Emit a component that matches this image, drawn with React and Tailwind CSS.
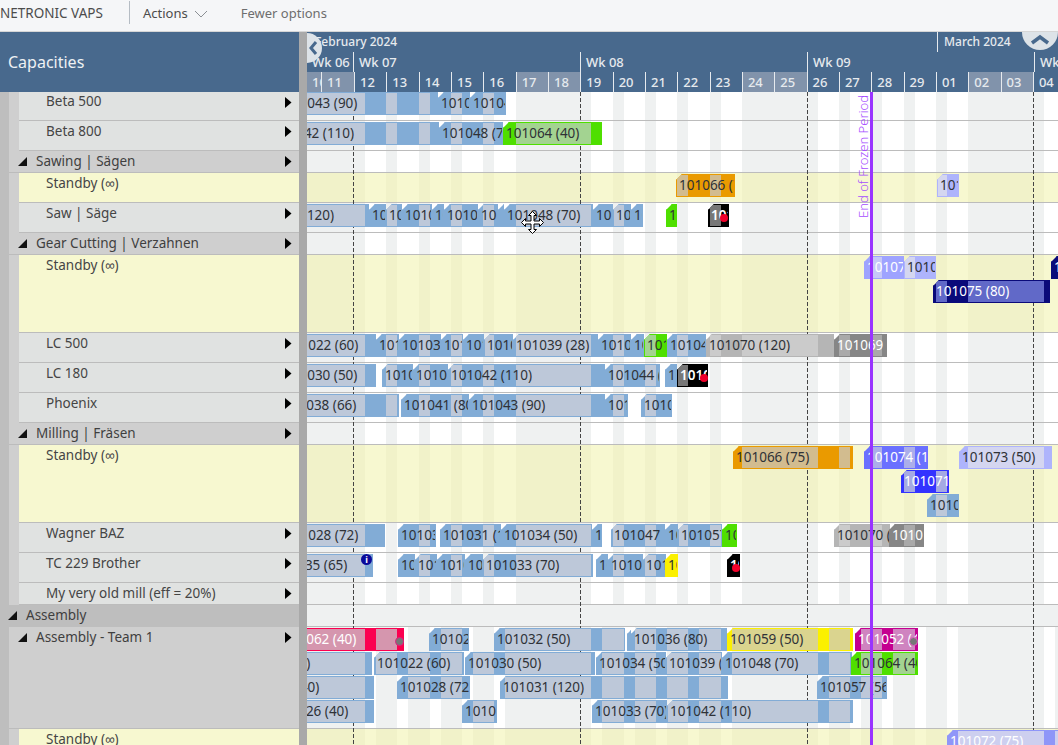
import React from "react";

const DAY = 32.33;
const dayStart = (n) => 289.33 + DAY * n; // n = 0 is Sat Feb 10
const isWeekend = (n) => n % 7 === 0 || n % 7 === 1;

// Non-working intervals per calendar, in page x
function offTimes(calendar) {
  const out = [];
  for (let n = 0; n < 24; n++) {
    const d = dayStart(n);
    if (isWeekend(n)) {
      out.push([d, d + DAY]);
    } else {
      out.push([d, d + 11]);
      if (calendar === "single") out.push([d + 22, d + DAY]);
    }
  }
  return out;
}

const TONES = {
  blue: { main: "bg-[#82acd6] border-[#82acd6]", off: "bg-[#bdc8d9]", text: "text-[#2f3237]" },
  green: { main: "bg-[#4fdf00] border-[#4fdf00]", off: "bg-[#a3d391]", text: "text-[#2f3237]" },
  orange: { main: "bg-[#ea9a00] border-[#ea9a00]", off: "bg-[#d2bc8f]", text: "text-[#2f3237]" },
  lavender: { main: "bg-[#aeb4fc] border-[#aeb4fc]", off: "bg-[#d4d6f0]", text: "text-[#2f3237]" },
  periwinkle: { main: "bg-[#9ea3ff] border-[#9ea3ff]", off: "bg-[#c5c8f8]", text: "text-white" },
  periwinkle2: { main: "bg-[#8f96f8] border-[#8f96f8]", off: "bg-[#cdcfef]", text: "text-white" },
  violet: { main: "bg-[#6a70ff] border-[#6a70ff]", off: "bg-[#abaeea]", text: "text-white" },
  bright: { main: "bg-[#3333ff] border-[#3333ff]", off: "bg-[#a5a9e3]", text: "text-white" },
  navy: { main: "bg-[#0a0a7a] border-[#0a0a7a]", off: "bg-[#6169c8]", text: "text-white" },
  gray: { main: "bg-[#b5b5b5] border-[#b5b5b5]", off: "bg-[#cbcbcb]", text: "text-[#2f3237]" },
  darkgray: { main: "bg-[#868686] border-[#868686]", off: "bg-[#a9a9a9]", text: "text-white" },
  black: { main: "bg-black border-black", off: "bg-[#777777]", text: "text-white font-semibold" },
  crimson: { main: "bg-[#fb0050] border-[#fb0050]", off: "bg-[#d596ae]", text: "text-white" },
  yellow: { main: "bg-[#fbf000] border-[#fbf000]", off: "bg-[#dad48f]", text: "text-[#2f3237]" },
  magenta: { main: "bg-[#c40090] border-[#c40090]", off: "bg-[#cf84c0]", text: "text-white" },
};

// Left tree and gantt rows, top to bottom
const ROWS = [
  { label: "Beta 500", kind: "leaf", h: 29, first: true },
  { label: "Beta 800", kind: "leaf", h: 30 },
  { label: "Sawing | Sägen", kind: "group", h: 22 },
  { label: "Standby (∞)", kind: "standby", h: 30 },
  { label: "Saw | Säge", kind: "leaf", h: 30 },
  { label: "Gear Cutting | Verzahnen", kind: "group", h: 22 },
  { label: "Standby (∞)", kind: "standby", h: 78 },
  { label: "LC 500", kind: "leaf", h: 30 },
  { label: "LC 180", kind: "leaf", h: 30 },
  { label: "Phoenix", kind: "leaf", h: 30 },
  { label: "Milling | Fräsen", kind: "group", h: 22 },
  { label: "Standby (∞)", kind: "standby", h: 78 },
  { label: "Wagner BAZ", kind: "leaf", h: 30 },
  { label: "TC 229 Brother", kind: "leaf", h: 30 },
  { label: "My very old mill (eff = 20%)", kind: "leaf", h: 22 },
  { label: "Assembly", kind: "top", h: 22 },
  { label: "Assembly - Team 1", kind: "team", h: 102, calendar: "single" },
  { label: "Standby (∞)", kind: "standby", h: 30, calendar: "single", last: true },
];

// [y, calendar, [[start, end, text, tone], ...]] in page coordinates
const LANES = [
  [92, "normal", [[281, 438, "101043 (90)"], [438, 470, "101048 (70)"], [470, 506, "101042 (110)"]]],
  [122, "normal", [[270, 439, "101042 (110)"], [439, 503, "101048 (70)"], [503, 602, "101064 (40)", "green"]]],
  [174, "normal", [[676, 735, "101066 (75)", "orange"], [937, 959, "101073 (50)", "lavender"]]],
  [204, "normal", [
    [250, 369, "101031 (120)"], [369, 386, "101022"], [386, 402, "101030"], [402, 432, "101028"], [432, 444, "101034"],
    [444, 478, "101033"], [478, 498, "101039"], [498, 504, ""], [504, 593, "101048 (70)"], [593, 613, "101044"],
    [613, 631, "101047"], [631, 643, "101057"], [666, 677, "101064", "green"], [708, 729, "101069", "black"],
  ]],
  [256, "normal", [[864, 904, "101074 (10)", "periwinkle"], [904, 936, "101073 (50)", "lavender"], [1051, 1090, "101076", "navy"]]],
  [280, "normal", [[933, 1050, "101075 (80)", "navy"]]],
  [334, "normal", [
    [282, 376, "101022 (60)"], [376, 399, "101028"], [399, 441, "101030"], [441, 463, "101031"], [463, 484, "101033"],
    [484, 513, "101034"], [513, 598, "101039 (28)"], [598, 631, "101042"], [631, 644, "101044"], [644, 667, "101064", "green"],
    [667, 706, "101047"], [706, 834, "101070 (120)", "gray"], [834, 887, "101069", "darkgray"],
  ]],
  [364, "normal", [
    [281, 376, "101030 (50)"], [382, 413, "101036"], [413, 448, "101037"], [448, 605, "101042 (110)"],
    [605, 660, "101044 (60)"], [665, 677, "101046"], [677, 708, "101068", "black"],
  ]],
  [394, "normal", [
    [280, 399, "101038 (66)"], [401, 469, "101041 (80)"], [469, 605, "101043 (90)"], [605, 628, "101045"], [641, 672, "101049"],
  ]],
  [446, "normal", [[733, 853, "101066 (75)", "orange"], [864, 928, "101074 (100)", "violet"], [959, 1052, "101073 (50)", "lavender"]]],
  [470, "normal", [[901, 949, "101071", "bright"]]],
  [494, "normal", [[927, 959, "101077"]]],
  [524, "normal", [
    [282, 385, "101028 (72)"], [398, 436, "101030"], [440, 501, "101031 (120)"], [501, 592, "101034 (50)"], [592, 602, "101038"],
    [611, 665, "101047"], [665, 678, "101050"], [678, 722, "101057"], [722, 737, "101064", "green"],
    [834, 890, "101070 (120)", "gray"], [889, 924, "101069", "darkgray"],
  ]],
  [554, "normal", [
    [271, 373, "101035 (65)"], [398, 415, "101021"], [415, 437, "101024"], [437, 465, "101025"], [465, 483, "101029"],
    [483, 593, "101033 (70)"], [596, 608, "101037"], [608, 643, "101040"], [643, 666, "101046"], [665, 678, "101059", "yellow"],
    [727, 740, "101068", "black"],
  ]],
  [628, "single", [
    [280, 404, "101062 (40)", "crimson"], [429, 469, "101026"], [494, 625, "101032 (50)"], [627, 631, ""], [631, 727, "101036 (80)"],
    [727, 853, "101059 (50)", "yellow"], [855, 918, "101052 (40)", "magenta"],
  ]],
  [652, "single", [
    [234, 372, "101018 (50)"], [374, 464, "101022 (60)"], [465, 595, "101030 (50)"], [596, 666, "101034 (50)"], [666, 722, "101039 (80)"],
    [722, 852, "101048 (70)"], [851, 918, "101064 (40)", "green"],
  ]],
  [676, "single", [[243, 374, "101020 (40)"], [397, 470, "101028 (72)"], [500, 728, "101031 (120)"], [817, 887, "101057 (56)"]]],
  [700, "single", [[272, 374, "101026 (40)"], [462, 497, "101037"], [592, 667, "101033 (70)"], [667, 853, "101042 (110)"]]],
  [730, "single", [[947, 1070, "101072 (75)", "periwinkle2"]]],
];

const DAY_LABELS = [
  ["10", true, "w-[14px]"],
  ["11", true, "w-[33px]"],
  ["12"], ["13"], ["14"], ["15"], ["16"],
  ["17", true], ["18", true],
  ["19"], ["20"], ["21"], ["22"], ["23"],
  ["24", true], ["25", true],
  ["26"], ["27"], ["28"], ["29"], ["01"],
  ["02", true], ["03", true],
  ["04"],
];

const WEEK_LINES = [353, 580, 807, 1033];

function Triangle({ className }) {
  return (
    <svg width="9" height="9" viewBox="0 0 9 9" className={className}>
      <polygon points="9,0 9,9 0,9" fill="#111" />
    </svg>
  );
}

function RowArrow() {
  return (
    <svg width="7" height="11" viewBox="0 0 7 11" className="absolute left-[285px] top-[5px]">
      <polygon points="0,0 6.5,5.5 0,11" fill="#000" />
    </svg>
  );
}

function TreeRow({ row }) {
  const { label, kind, h, last, first } = row;
  const height = { height: h };
  const border = last ? "" : "border-b border-[#bcbcbc]";

  if (kind === "top") {
    return (
      <div style={height} className="relative flex shrink-0 items-start bg-[#bebebe] text-[#3f3f3f]">
        <Triangle className="ml-[8px] mt-[6px]" />
        <span className="ml-[9px] leading-[20px]">{label}</span>
      </div>
    );
  }

  if (kind === "group" || kind === "team") {
    return (
      <div style={height} className="flex shrink-0 bg-[#bebebe]">
        <div className={`relative flex flex-1 items-start ml-[9px] bg-[#cfcfcf] text-[#3f3f3f] ${border}`}>
          <Triangle className="ml-[9px] mt-[6px]" />
          <span className="ml-[9px] leading-[20px]">{label}</span>
          <div className="absolute left-[-9px] top-0">
            <RowArrow />
          </div>
        </div>
      </div>
    );
  }

  return (
    <div style={height} className="flex shrink-0 bg-[#bebebe]">
      <div className="w-[9px] shrink-0" />
      <div className="w-[10px] shrink-0 bg-[#cfcfcf]" />
      <div
        className={`relative flex-1 pl-[27px] leading-[20px] text-[#454545] ${border} ${
          kind === "standby" ? "bg-[#f7f8d0]" : "bg-[#e0e2e1]"
        }`}
      >
        <span className={first ? "relative -top-px" : ""}>{label}</span>
        {kind === "leaf" && (
          <div className="absolute left-[-19px] top-0">
            <RowArrow />
          </div>
        )}
      </div>
    </div>
  );
}

function GanttRow({ row }) {
  const { kind, h, calendar, last } = row;
  const bg = kind === "standby" ? "bg-[#f7f8d0]" : kind === "top" ? "bg-[#eff1f1]" : "bg-white";
  const stripe = kind === "standby" ? "bg-[#f1f2c9]" : "bg-[#eff1f1]";
  return (
    <div
      style={{ height: h }}
      className={`relative shrink-0 overflow-hidden ${bg} ${last ? "" : "border-b border-[#bcbcbc]"}`}
    >
      {kind !== "top" &&
        offTimes(calendar).map(([from, to]) => (
          <span
            key={from}
            className={`absolute top-0 bottom-0 ${stripe}`}
            style={{ left: from - 307, width: to - from }}
          />
        ))}
    </div>
  );
}

function Bar({ y, calendar, start, end, text, tone = "blue" }) {
  const t = TONES[tone];
  return (
    <div
      className={`absolute h-[23px] overflow-hidden border border-solid whitespace-nowrap pl-[2px] leading-[20px] [clip-path:polygon(6px_0,100%_0,100%_100%,0_100%,0_6px)] ${t.main} ${t.text}`}
      style={{ left: start - 307, top: y - 92, width: end - start }}
    >
      {offTimes(calendar)
        .filter(([from, to]) => to > start && from < end)
        .map(([from, to]) => (
          <span
            key={from}
            className={`absolute top-0 bottom-0 ${t.off}`}
            style={{ left: from - start - 1, width: to - from }}
          />
        ))}
      <span className="relative">{text}</span>
    </div>
  );
}

function MoveCursor() {
  return (
    <svg width="25" height="25" viewBox="-12.5 -12.5 25 25" className="absolute left-[213px] top-[118px]">
      <path
        d="M0 -11 L4 -7 L1.5 -7 L1.5 -1.5 L7 -1.5 L7 -4 L11 0 L7 4 L7 1.5 L1.5 1.5 L1.5 7 L4 7 L0 11 L-4 7 L-1.5 7 L-1.5 1.5 L-7 1.5 L-7 4 L-11 0 L-7 -4 L-7 -1.5 L-1.5 -1.5 L-1.5 -7 L-4 -7 Z"
        fill="#fff"
        stroke="#000"
        strokeWidth="1"
      />
    </svg>
  );
}

function TimelineHeader() {
  return (
    <div className="relative h-[60px] shrink-0 overflow-hidden bg-[#48698d] text-[13px] font-medium leading-[20px] text-[#e6eaee] whitespace-nowrap">
      <div className="flex h-[20px] text-[12px]">
        <div className="w-[630px] shrink-0 pl-[8px]">February 2024</div>
        <div className="flex-1 border-l border-[#e6eaee] pl-[6px]">March 2024</div>
      </div>
      <div className="flex h-[20px]">
        <div className="w-[46px] shrink-0 pl-[5px]">Wk 06</div>
        <div className="w-[227px] shrink-0 border-l border-[#e6eaee] pl-[5px]">Wk 07</div>
        <div className="w-[227px] shrink-0 border-l border-[#e6eaee] pl-[5px]">Wk 08</div>
        <div className="w-[227px] shrink-0 border-l border-[#e6eaee] pl-[5px]">Wk 09</div>
        <div className="flex-1 border-l border-[#e6eaee] pl-[5px]">Wk 10</div>
      </div>
      <div className="flex h-[20px]">
        {DAY_LABELS.map(([label, weekend, width], i) => (
          <div
            key={label}
            className={`shrink-0 overflow-hidden pl-[5px] ${width || "w-[32.33px]"} ${i > 0 ? "border-l border-[#e6eaee]" : ""} ${
              weekend ? "bg-[#8193ab]" : ""
            }`}
          >
            {label}
          </div>
        ))}
      </div>
      {/* paging tabs */}
      <svg width="15" height="30" viewBox="0 0 15 30" className="absolute left-0 top-[1px]">
        <path d="M0 0 A15 15 0 0 1 0 30 Z" fill="#dde3e8" />
        <path d="M9 9 L4 15 L9 21" fill="none" stroke="#48698d" strokeWidth="3" />
      </svg>
      <svg width="36" height="18" viewBox="0 0 36 18" className="absolute left-[715px] top-0">
        <path d="M0 0 A18 18 0 0 0 36 0 Z" fill="#dde3e8" />
        <path d="M10 11 L18 5 L26 11" fill="none" stroke="#48698d" strokeWidth="3.5" />
      </svg>
    </div>
  );
}

export default function App() {
  return (
    <div className="flex h-screen w-full flex-col overflow-hidden bg-white font-['Noto_Sans',sans-serif] text-[13.5px]">
      {/* top bar */}
      <div className="flex h-[32px] shrink-0 items-start border-b border-[#d6d6d6] bg-[#f5f6f8] text-[13px] text-[#4c4c4c]">
        <span className="w-[129px] text-[13.5px] leading-[26px]">NETRONIC VAPS</span>
        <div className="mt-px h-[23px] w-px bg-[#b5bcc4]" />
        <span className="ml-[13px] leading-[26px]">Actions</span>
        <svg width="14" height="8" viewBox="0 0 14 8" className="ml-[6px] mt-[10px]">
          <path d="M1 1 L7 7 L13 1" fill="none" stroke="#8b8f94" strokeWidth="1" />
        </svg>
        <span className="ml-[33px] leading-[26px] text-[#6e6e6e]">Fewer options</span>
      </div>

      <div className="flex min-h-0 flex-1">
        {/* capacity tree */}
        <div className="flex w-[299px] shrink-0 flex-col overflow-hidden">
          <div className="flex h-[60px] shrink-0 items-center bg-[#48698d] pl-[8px] text-[16px] text-[#eef1f4]">
            Capacities
          </div>
          {ROWS.map((row, i) => (
            <TreeRow key={i} row={row} />
          ))}
        </div>

        {/* splitter */}
        <div className="w-[8px] shrink-0 bg-[#a9a9a9]" />

        {/* gantt */}
        <div className="flex min-w-0 flex-1 flex-col overflow-hidden">
          <TimelineHeader />
          <div className="relative flex-1 overflow-hidden">
            {ROWS.map((row, i) => (
              <GanttRow key={i} row={row} />
            ))}

            {WEEK_LINES.map((x) => (
              <div
                key={x}
                className="absolute top-0 bottom-0 w-px bg-[repeating-linear-gradient(to_bottom,#444_0,#444_4px,transparent_4px,transparent_6px)]"
                style={{ left: x - 307 }}
              />
            ))}

            {LANES.map(([y, calendar, bars]) =>
              bars.map(([start, end, text, tone]) => (
                <Bar key={`${y}-${start}`} y={y} calendar={calendar} start={start} end={end} text={text} tone={tone} />
              ))
            )}

            {/* markers on bars */}
            <span className="absolute left-[413px] top-[122px] h-[8px] w-[8px] rounded-full bg-[#f0002a]" />
            <span className="absolute left-[393px] top-[282px] h-[8px] w-[8px] rounded-full bg-[#f0002a]" />
            <span className="absolute left-[425px] top-[472px] h-[8px] w-[8px] rounded-full bg-[#f0002a]" />
            <span className="absolute left-[88px] top-[545px] h-[9px] w-[9px] rounded-full border border-[#e0207f] bg-[#777777]" />
            <span className="absolute left-[602px] top-[545px] h-[9px] w-[9px] rounded-full border border-[#e060c0] bg-[#777777]" />
            <span className="absolute left-[54px] top-[462px] flex h-[11px] w-[11px] items-center justify-center rounded-full bg-[#0a0a9a] text-[9px] font-bold leading-none text-white">
              i
            </span>

            <MoveCursor />

            {/* frozen period */}
            <div className="absolute left-[563px] top-0 bottom-0 w-[2.5px] bg-[#9933ff]" />
            <div className="absolute left-[548px] top-[3px] rotate-180 whitespace-nowrap text-[13px] font-light text-[#a64dff] leading-[16px] [writing-mode:vertical-rl]">
              End of Frozen Period
            </div>
          </div>
        </div>
      </div>
    </div>
  );
}
